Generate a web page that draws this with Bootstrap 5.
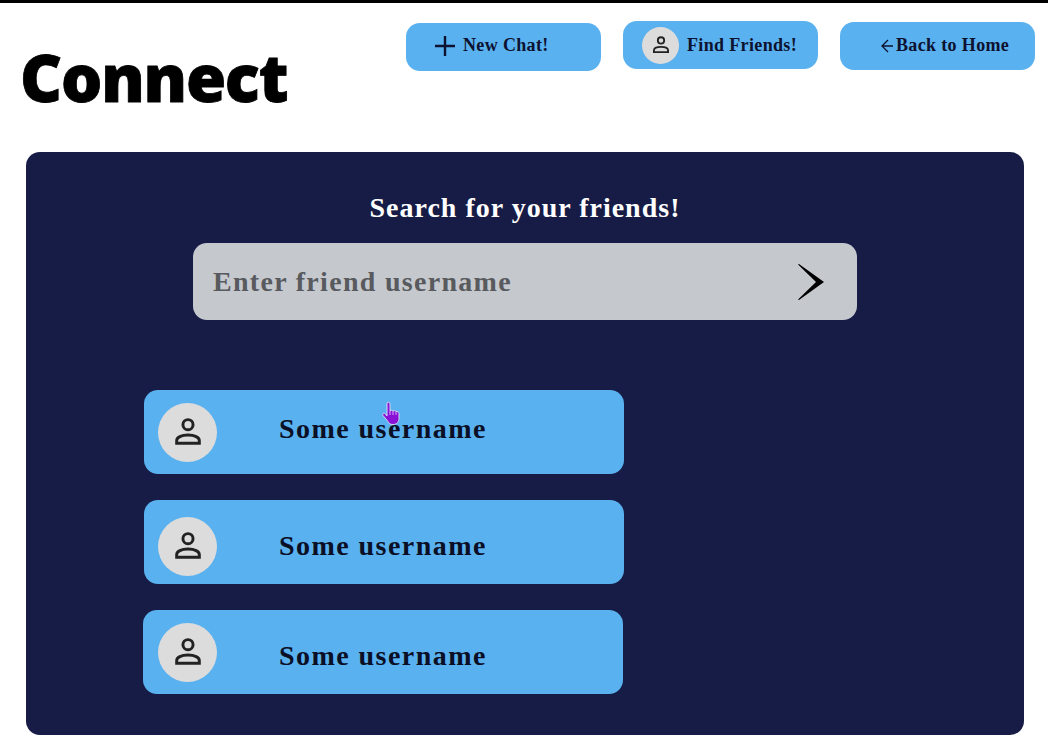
<!DOCTYPE html>
<html lang="en">
<head>
    <meta charset="UTF-8">
    <meta name="viewport" content="width=device-width, initial-scale=1.0">
    <title>Connect</title>
    <link href="https://cdn.jsdelivr.net/npm/bootstrap@5.3.0/dist/css/bootstrap.min.css" rel="stylesheet">
    <style>
        html, body {
            height: 745px;
            overflow: hidden;
        }
        body {
            background: #fff;
            border-top: 3px solid #000;
            font-family: "Liberation Serif", serif;
            color: #0c1230;
        }
        .top-area {
            height: 149px;
            padding-left: 20px;
            padding-right: 13px;
        }
        .brand-title {
            font-family: "Open Sans", sans-serif;
            font-weight: 800;
            font-size: 65px;
            line-height: 1;
            letter-spacing: -1.2px;
            color: #000;
            margin: 42px 0 0 0;
            -webkit-text-stroke: .8px #000;
        }
        .top-actions { gap: 22px; }
        .top-btn {
            width: 195px;
            height: 48px;
            background: #5ab1ef;
            border: 0;
            border-radius: 14px;
            font-weight: 700;
            font-size: 18px;
            letter-spacing: .35px;
            color: #0c1230;
        }
        .top-btn:hover { background: #5ab1ef; color: #0c1230; }
        .btn-new { margin-top: 20px; padding: 0 0 3px 29px; }
        .btn-find { margin-top: 18px; padding: 0 0 0 19px; }
        .btn-home { margin-top: 19px; padding: 0 0 1px 41px; gap: 3px; }
        .avatar-dot {
            background: #dcdcdc;
            border-radius: 50%;
            flex-shrink: 0;
        }
        .avatar-sm { width: 37px; height: 37px; }
        .avatar-lg { width: 59px; height: 59px; }
        .main-panel {
            background: #161c45;
            margin-left: 26px;
            width: 998px;
            height: 583px;
            border-radius: 14px;
        }
        .panel-title {
            color: #fff;
            font-size: 28px;
            font-weight: 700;
            letter-spacing: 1px;
            line-height: 1;
            text-align: center;
            padding-top: 42px;
            margin: 0;
        }
        .search-box {
            background: #c5c9ce;
            width: 664px;
            height: 77px;
            margin: 21px 0 0 167px;
            border-radius: 14px;
            padding: 0 33px 0 20px;
        }
        .search-box input {
            background: transparent;
            border: 0;
            outline: 0;
            flex: 1;
            padding: 0;
            font-weight: 700;
            font-size: 28px;
            letter-spacing: 1.3px;
            color: #555;
        }
        .search-box input::placeholder { color: #585a5e; opacity: 1; }
        .friend-list {
            margin: 70px 0 0 118px;
            width: 480px;
        }
        .friend-row {
            height: 84px;
            background: #5ab1ef;
            border-radius: 14px;
            padding-left: 14px;
            margin-bottom: 26px;
        }
        .friend-name {
            font-size: 28px;
            font-weight: 700;
            letter-spacing: 1.45px;
            color: #0a0f26;
            margin-left: 62px;
            line-height: 1;
        }
        /* the rows are not quite even in the picture */
        .nudge-up { margin-bottom: 6px; }
        .nudge-down { margin-top: 8px; }
        .row-last { margin-left: -1px; margin-right: 1px; padding-left: 15px; }
        .cursor-hand {
            position: absolute;
            left: 382px;
            top: 401px;
        }
    </style>
</head>
<body>
    <svg width="0" height="0" class="d-block">
        <symbol id="person" viewBox="0 0 24 24" fill="none" stroke="#222" stroke-width="2.200">
            <circle cx="12" cy="6.500" r="3.800"/>
            <path d="M3.500 20.500v-2c0-2.500 3.500-4.200 8.500-4.200s8.500 1.700 8.500 4.200v2z"/>
        </symbol>
    </svg>

    <div class="top-area d-flex justify-content-between align-items-start">
        <h1 class="brand-title">Connect</h1>
        <div class="top-actions d-flex ms-auto">
            <button class="btn top-btn btn-new d-flex align-items-center gap-2">
                <svg width="20" height="20" viewBox="0 0 20 20" fill="none" stroke="#0c1230" stroke-width="2.400"><path d="M10 0v20M0 10h20"/></svg>
                <span>New Chat!</span>
            </button>
            <button class="btn top-btn btn-find d-flex align-items-center gap-2">
                <span class="avatar-dot avatar-sm d-flex align-items-center justify-content-center">
                    <svg width="20" height="20"><use href="#person"/></svg>
                </span>
                <span>Find Friends!</span>
            </button>
            <button class="btn top-btn btn-home d-flex align-items-center">
                <svg width="12" height="14" viewBox="0 0 12 14" fill="none" stroke="#0c1230" stroke-width="1.300"><path d="M12 7H1M7 1L1 7l6 6"/></svg>
                <span>Back to Home</span>
            </button>
        </div>
    </div>

    <div class="main-panel">
        <h2 class="panel-title">Search for your friends!</h2>
        <div class="search-box d-flex align-items-center">
            <input type="text" placeholder="Enter friend username">
            <svg width="26" height="36" viewBox="0 0 26 36" fill="#000"><path d="M0 .5L1 0 26 18 1 36 0 35.500 18 18z"/></svg>
        </div>
        <div class="friend-list">
            <div class="friend-row d-flex align-items-center">
                <span class="avatar-dot avatar-lg d-flex align-items-center justify-content-center">
                    <svg width="32" height="32"><use href="#person"/></svg>
                </span>
                <span class="friend-name nudge-up">Some username</span>
            </div>
            <div class="friend-row d-flex align-items-center">
                <span class="avatar-dot avatar-lg nudge-down d-flex align-items-center justify-content-center">
                    <svg width="32" height="32"><use href="#person"/></svg>
                </span>
                <span class="friend-name nudge-down">Some username</span>
            </div>
            <div class="friend-row row-last d-flex align-items-center">
                <span class="avatar-dot avatar-lg d-flex align-items-center justify-content-center">
                    <svg width="32" height="32"><use href="#person"/></svg>
                </span>
                <span class="friend-name nudge-down">Some username</span>
            </div>
        </div>
    </div>

    <!-- mouse pointer sits over the first row -->
    <svg class="cursor-hand" width="20" height="26" viewBox="0 0 20 26">
        <path d="M5 2c1-1.500 3-1 3 1v7c1-1 2-1 3 0 1-.5 2-.5 3 .5 1-.2 3 .5 3 2v5c0 3-2 6-6 6-3 0-4-1-5-3l-5-6c-1-2 1-3 2.500-1.500L5 15z" fill="#8a12d6" stroke="#cfd8f5" stroke-width="1"/>
        <path d="M8 10v4M11 10v4M14 11v3" stroke="#e6d6ff" stroke-width=".8"/>
    </svg>

    <script src="https://cdn.jsdelivr.net/npm/bootstrap@5.3.0/dist/js/bootstrap.bundle.min.js"></script>
</body>
</html>
